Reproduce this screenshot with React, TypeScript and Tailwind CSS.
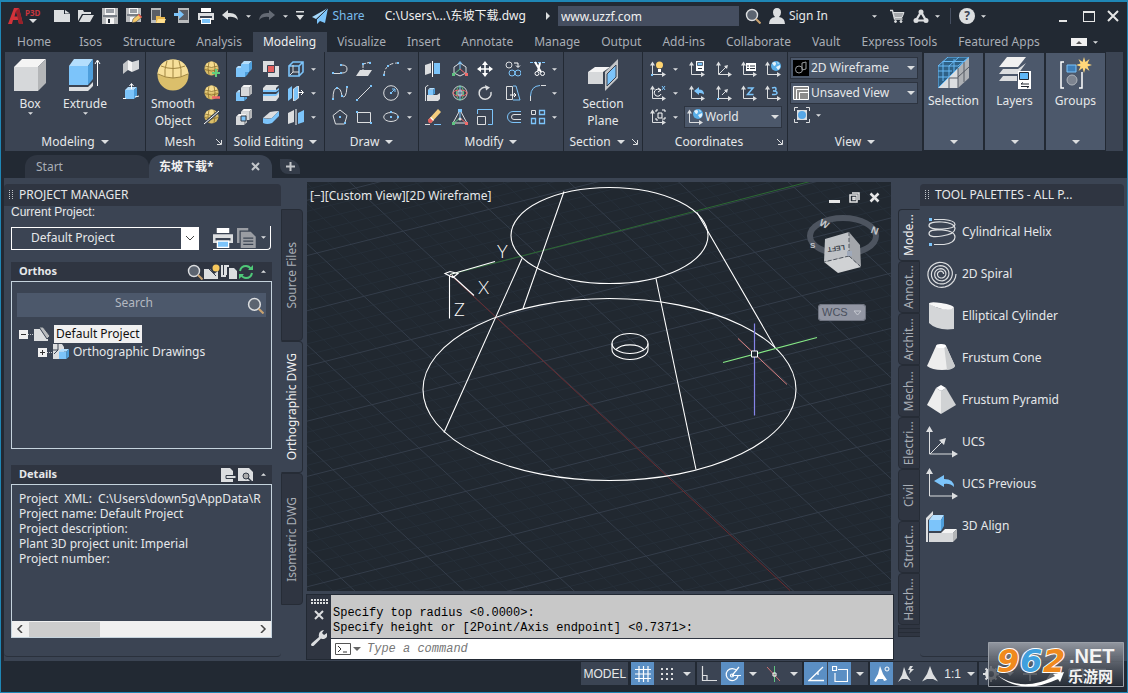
import { type ReactNode } from "react";

const W = "#dcdee0";
const B = "#7cc4fa";

function Cube({ x, y, s, blue = false }: { x: number; y: number; s: number; blue?: boolean }) {
  const d = s * 0.25;
  return (
    <g>
      <path d={`M${x} ${y + d}h${s - d}v${s - d}h${-(s - d)}z`} fill={blue ? "#7cc4fa" : "#d6d8da"} />
      <path d={`M${x} ${y + d}l${d} ${-d}h${s - d}l${-d} ${d}z`} fill={blue ? "#b4defd" : "#f4f4f4"} />
      <path d={`M${x + s - d} ${y + d}l${d} ${-d}v${s - d}l${-d} ${d}z`} fill={blue ? "#4e9fdc" : "#b4b6b8"} />
    </g>
  );
}

function Axes({ children }: { children?: ReactNode }) {
  return (
    <g>
      <path d="M2.500 3v10.500h11" fill="none" stroke={W} />
      <path d="M0 4.500L2.500 0.500L5 4.500zM12 11l4 2.500l-4 2.500z" fill={W} />
      {children}
    </g>
  );
}

function Globe({ x = 10, y = 5 }: { x?: number; y?: number }) {
  return (
    <g>
      <circle cx={x} cy={y} r="5" fill="#58aee8" />
      <path d={`M${x - 4} ${y - 3}q3-2 4 0q0 3-2 3zM${x} ${y + 1}l4-2q1 3-2 5zM${x + 1} ${y - 4}l2 1l-1 1z`} fill="#e4f2fb" />
    </g>
  );
}

function Sphere() {
  return (
    <g>
      <circle cx="7.500" cy="7.500" r="7" fill="#d9bd68" />
      <path d="M1 6q1-5 6.500-5.500q5.500 .5 6.500 5.500q-6.500 3-13 0z" fill="#f5dc8f" />
      <path d="M1 5q6.500 3 13 0M.5 8.500q7 3 14 0M5 1q-2 6 0 13M10 1q2 6 0 13" fill="none" stroke="#8a6f2c" strokeWidth=".8" />
    </g>
  );
}

const dot = (x: number, y: number) => <rect x={x - 1} y={y - 1} width="2" height="2" fill={B} />;

const icons: Record<string, ReactNode> = {
  new: <path d="M0 2h10v4h6v8H0zM11 2l5 3.500h-5z" fill={W} />,
  open: <path d="M0 13V2h5l1 2h7v2H4zM1 14L5 7h11l-4 7z" fill={W} />,
  save: (
    <g>
      <path d="M0 0h16v16H0z" fill="#b9bbbd" />
      <path d="M3 0h10v7H3zM4 10h8v6H4z" fill="#f5f5f5" />
      <path d="M4 2h8M4 4h8M1 8h14" stroke="#3b4453" />
      <path d="M6 11h2v4H6z" fill="#222933" />
    </g>
  ),
  saveAs: (
    <g>
      <path d="M0 0h15v14H0z" fill="#b9bbbd" />
      <path d="M3 0h9v6H3zM4 9h6v5H4z" fill="#f5f5f5" />
      <path d="M4 2h7M4 4h7M1 7h13" stroke="#3b4453" />
      <path d="M6 15l1-4l6-5l3 3l-6 5z" fill="#f5c96a" stroke="#222933" strokeWidth=".5" />
      <path d="M12 7l1-1l3 3l-1 1z" fill="#e55" />
    </g>
  ),
  webOpen: (
    <g>
      <path d="M1 0h10v15H1z" fill="#b9bbbd" />
      <path d="M2 2h8v10H2z" fill="#5a5e66" />
      <path d="M6 8h4l1 1h4v6H6z" fill="#e9b84e" />
      <path d="M8 11h8l-2 4H6z" fill="#ffdf8e" />
    </g>
  ),
  webSave: (
    <g>
      <path d="M4 0h11v15H4z" fill="#b9bbbd" />
      <path d="M5 2h9v10H5z" fill="#5a5e66" />
      <path d="M0 5h5V2l5 4.500L5 11V8H0z" fill={B} />
    </g>
  ),
  print: (
    <g>
      <path d="M3 0h10v4H3z" fill="#fff" />
      <path d="M0 5h16v7H0z" fill={W} />
      <path d="M2 8h12v2H2z" fill="#3b4453" />
      <path d="M3 10h10v6H3z" fill="#fff" />
      <path d="M4 11h8v4H4z" fill={B} />
    </g>
  ),
  undo: <path d="M0 7l6-5v3q9-1 10 7q-4-4-10-3v3z" fill={W} />,
  redo: <path d="M16 7l-6-5v3q-9-1-10 7q4-4 10-3v3z" fill="#646a74" />,
  more: <path d="M4 3h8v1.500H4zM4 7h8l-4 5z" fill={W} />,
  share: (
    <g>
      <path d="M16 0L0 9l4 2z" fill="#a5d8fb" />
      <path d="M16 0L5 11v5l3-3l5 2z" fill={B} />
      <path d="M16 0L5 11" stroke="#222933" strokeWidth=".8" />
    </g>
  ),
  find: (
    <g>
      <circle cx="7" cy="7" r="5.500" fill="#5c6470" stroke={W} strokeWidth="1.400" />
      <path d="M11 11l4.500 4.500" stroke="#c9a270" strokeWidth="2" />
    </g>
  ),
  user: <path d="M8 0q4 0 4 4.500q0 3-2 4.500q6 1 6 7H0q0-6 6-7q-2-1.500-2-4.500Q4 0 8 0z" fill={W} />,
  cart: (
    <g fill="none" stroke={W}>
      <path d="M1 2.500h2.500l2 8.500h8" strokeWidth="1.300" />
      <path d="M4 4.500h11l-2 5H5.500z" fill="#a6a9ad" />
      <circle cx="6.500" cy="13.500" r="1" fill={W} />
      <circle cx="12" cy="13.500" r="1" fill={W} />
    </g>
  ),
  app: (
    <g fill={W}>
      <path d="M8 4L3 12.500h10z" fill="none" stroke={W} strokeWidth="2.200" />
      <circle cx="8" cy="4" r="2.500" />
      <circle cx="3" cy="12.500" r="2.500" />
      <circle cx="13" cy="12.500" r="2.500" />
    </g>
  ),
  polysolid: (
    <g>
      <path d="M0 5l5-4v10l-5 4z" fill="#c4c6c8" />
      <path d="M5 1l4 2v10l-4-2z" fill="#f4f4f4" />
      <path d="M9 3l7-2v9l-7 3z" fill="#d6d8da" />
    </g>
  ),
  presspull: (
    <g>
      <Cube x={2} y={4} s={12} blue />
      <path d="M8.500 6V1M6.500 3l2-2.500l2 2.500M0 15.500h3M12 14l4-1" stroke="#fff" fill="none" />
    </g>
  ),
  meshAdd: (
    <g>
      <Sphere />
      <path d="M12 8v8M8 12h8" stroke="#62cf7e" strokeWidth="2" />
    </g>
  ),
  meshLess: (
    <g>
      <Sphere />
      <path d="M8 12.500h8" stroke="#f0696b" strokeWidth="2.500" />
    </g>
  ),
  meshCrease: (
    <g>
      <Sphere />
      <path d="M0 15L15 2" stroke="#3b4453" strokeWidth="3" />
      <path d="M0 15L15 2" stroke="#fff" />
    </g>
  ),
  union: (
    <g>
      <path d="M0 7h5V3h8v8h-4v5H0z" fill={B} />
      <path d="M0 7l2-2h3v2zM5 3l3-3h8l-3 3z" fill="#b4defd" />
      <path d="M13 3l3-3v8l-3 3zM9 11h4l-1.500 2.500L9 16z" fill="#4e9fdc" />
    </g>
  ),
  subtract: (
    <g>
      <Cube x={0} y={5} s={11} blue />
      <path d="M4 3h9v9H4z" fill="#3b4453" />
      <Cube x={5} y={0} s={11} />
    </g>
  ),
  intersect: (
    <g>
      <Cube x={5} y={0} s={11} />
      <Cube x={0} y={5} s={11} />
      <path d="M5 7h5v5H5z" fill={B} stroke="#333b47" />
    </g>
  ),
  interfere: (
    <g>
      <path d="M0 0h11v11H0zM5 5h11v11H5z" fill={W} />
      <path d="M4.500 4.500h7v7h-7z" fill="#e4605f" stroke="#3b4453" />
    </g>
  ),
  slice: (
    <g>
      <path d="M0 3l3-3h13l-3 3v4H0zM0 10h13l3-3v5l-3 4H0z" fill={W} />
      <path d="M0 5h13l3-2v2l-3 2H0zM0 9h13l3-3v2l-3 3H0z" fill={B} />
    </g>
  ),
  thicken: (
    <g>
      <path d="M0 9l7-6q5-1 9-1l-7 7q-4 1-9 0z" fill={W} />
      <path d="M0 9q5 2 9 0l7-7v5l-7 7q-5 2-9 0z" fill={B} />
    </g>
  ),
  extractEdges: (
    <g fill="none" stroke={B} strokeWidth="1.600">
      <path d="M1 5h10v10H1zM1 5l4-4h10v10l-4 4M11 5l4-4" />
      <path d="M5 4v7h6M5 11l-3 3" stroke={W} strokeWidth="1" />
    </g>
  ),
  extrudeFaces: (
    <g>
      <path d="M0 4l4-3v12l-4 3z" fill={B} />
      <path d="M5 4l4-3h2v12l-4 3H5z" fill={W} />
      <path d="M6 4l4-3v12l-4 3z" fill={B} />
      <path d="M10 7.500h5M13 5l2.500 2.500L13 10" stroke="#fff" fill="none" />
    </g>
  ),
  separate: (
    <g>
      <path d="M0 4l6-3v12l-6 2z" fill={W} />
      <path d="M10 4l6-3v12l-6 2z" fill={B} />
      <path d="M8 0v16" stroke="#fff" />
    </g>
  ),
  polyline: (
    <g>
      <path d="M1 12.500h8M10 4q5 0 5 4t-5 4" stroke={W} fill="none" />
      {dot(1, 12)}
      {dot(9, 4)}
      {dot(9, 12)}
    </g>
  ),
  polyline3d: (
    <g>
      <path d="M0 15l4-6h12l-4 6z" fill={W} />
      <path d="M7 11V3l8-2" stroke={W} fill="none" strokeDasharray="3 1" />
      {dot(7, 3)}
      {dot(14, 2)}
    </g>
  ),
  arc: (
    <g>
      <path d="M1 14Q2 2 15 2" stroke={W} fill="none" strokeDasharray="4 2" />
      {dot(1, 14)}
      {dot(5, 5)}
      {dot(15, 2)}
    </g>
  ),
  spline: (
    <g>
      <path d="M1 14Q1 3 5 3t5 8q4 4 5-9" stroke={W} fill="none" />
      {dot(1, 14)}
      {dot(5, 3)}
      {dot(10, 11)}
      {dot(15, 2)}
    </g>
  ),
  line: (
    <g>
      <path d="M1 15L15 1" stroke={W} />
      {dot(1, 15)}
      {dot(15, 1)}
    </g>
  ),
  circle: (
    <g>
      <circle cx="8" cy="8" r="7.300" stroke={W} fill="none" />
      <path d="M8 8l4-4M12 7V4H9" stroke={B} fill="none" />
      {dot(8, 8)}
    </g>
  ),
  polygon: (
    <g>
      <path d="M8 1l7 5.500L12.500 15h-9L1 6.500z" stroke={W} fill="none" />
      {dot(8, 8)}
      {dot(13, 14)}
    </g>
  ),
  rect: (
    <g>
      <path d="M1.500 3.500h13v10h-13z" stroke={W} fill="none" />
      {dot(1, 3)}
      {dot(15, 14)}
    </g>
  ),
  ellipse: (
    <g>
      <ellipse cx="8" cy="8" rx="7.300" ry="4.500" stroke={W} fill="none" />
      {dot(8, 8)}
      {dot(15, 8)}
      {dot(8, 3)}
    </g>
  ),
  mirror: (
    <g>
      <path d="M0 4l6-2v10l-6 2z" fill={W} />
      <path d="M9 2h6v11H9z" fill={B} />
      <path d="M7.500 0v16" stroke="#fff" />
    </g>
  ),
  align3d: (
    <g>
      <path d="M.5 16V2l3-2" stroke={W} fill="none" />
      <Cube x={3} y={3} s={7} blue />
      <path d="M2 10h10l3-2v6l-2 2H2z" fill={W} />
    </g>
  ),
  erase: (
    <g>
      <path d="M3 11l10-11l3 3L6 14z" fill="#f5cf7e" />
      <path d="M5 9l3 3l1-1l-3-3z" fill="#fff" />
      <path d="M3 11l2-2l3 3l-2 2q-3 1-3-3z" fill="#e55f5f" />
      <path d="M0 15.500h5" stroke={W} />
      <path d="M9 15.500h7" stroke={B} />
    </g>
  ),
  move3d: (
    <g fill="none">
      <path d="M8 2L2 6v6l6 3l6-3V6z" stroke={W} />
      <path d="M8 8V1M6 3l2-2.500L10 3" stroke={B} />
      <path d="M8 8l-6 5" stroke="#5fc481" />
      <path d="M8 8l6 5" stroke="#ee6a6a" />
      <path d="M0 12h3v3H0z" fill="#5fc481" />
      <path d="M13 12h3v3h-3z" fill="#ee6a6a" />
    </g>
  ),
  rotate3d: (
    <g fill="none">
      <circle cx="8" cy="8" r="7" stroke="#c9cbcd" />
      <ellipse cx="8" cy="8" rx="3.500" ry="7" stroke="#5fc481" />
      <ellipse cx="8" cy="8" rx="7" ry="3" stroke="#ee6a6a" />
      <path d="M6 6h4v4H6z" stroke={W} />
      <path d="M8 1v14" stroke={B} />
    </g>
  ),
  scale3d: (
    <g fill="none">
      <path d="M8 1L1 14h14z" stroke={W} />
      <path d="M8 9V1" stroke={B} />
      <path d="M8 9l-6 5" stroke="#5fc481" />
      <path d="M8 9l6 5" stroke="#ee6a6a" />
      <path d="M6 0h4v3H6z" fill={B} />
      <path d="M0 13h3v3H0z" fill="#5fc481" />
      <path d="M13 13h3v3h-3z" fill="#ee6a6a" />
      <circle cx="8" cy="10" r="1.500" fill={W} />
    </g>
  ),
  move: (
    <g>
      <path d="M8 2v12M2 8h12" stroke="#fff" strokeWidth="1.600" />
      <path d="M8 0l3 4H5zM8 16l3-4H5zM0 8l4-3v6zM16 8l-4-3v6z" fill="#fff" />
    </g>
  ),
  rotate: (
    <g>
      <path d="M10 2.500A6 6 0 1 0 14 7" stroke={W} strokeWidth="1.500" fill="none" />
      <path d="M8 0l5 2.500l-4 3z" fill={W} />
    </g>
  ),
  scale: (
    <g fill="none">
      <path d="M.5 5V.5h15v15H11" stroke={B} />
      <path d="M.5 7.500h8v8h-8z" stroke={W} />
    </g>
  ),
  copy: (
    <g fill="none">
      <circle cx="4" cy="4" r="3" stroke={W} />
      <circle cx="7" cy="12" r="3" stroke={B} />
      <circle cx="13" cy="12" r="3" stroke={B} />
      <path d="M9 2h4v4M11 4.500l2 2l2-2" stroke="#fff" />
    </g>
  ),
  stretch: (
    <g fill="none">
      <path d="M1.500 1.500h6v13h-6z" stroke={W} />
      <path d="M8 1h3l4 14H8" stroke={B} />
      <path d="M5 10h6M9 8l2 2l-2 2" stroke="#fff" />
    </g>
  ),
  offset: (
    <g fill="none">
      <path d="M16 2.500H8a5.500 5.500 0 0 0 0 11h8" stroke={B} />
      <path d="M16 5.500H9a2.500 2.500 0 0 0 0 5h7" stroke={W} />
    </g>
  ),
  trim: (
    <g fill="none">
      <path d="M0 1.500h16" stroke={B} strokeDasharray="3 1" />
      <path d="M5 1l6 10M10 2L8 10" stroke="#fff" strokeWidth="2" />
      <circle cx="7" cy="12.500" r="2" stroke="#fff" />
      <circle cx="12.500" cy="12.500" r="2" stroke="#fff" />
    </g>
  ),
  fillet: (
    <g fill="none">
      <path d="M.5 16v-5" stroke={W} />
      <path d="M.5 11Q1 1 10 .5" stroke={B} />
      <path d="M11 .5h5" stroke={W} />
    </g>
  ),
  array: (
    <g fill="none">
      <path d="M1.500 1.500h4v4h-4z" stroke={W} />
      <path d="M9.500 1.500h5v4h-5zM1.500 9.500h4v5h-4zM9.500 9.500h5v5h-5z" stroke={B} strokeWidth="1.300" />
    </g>
  ),
  ucsIcon: (
    <Axes>
      <circle cx="9.500" cy="4" r="3.500" fill="#ffd470" />
      <path d="M8 8h3v3H8z" fill="#fff" />
      {dot(2, 14)}
    </Axes>
  ),
  ucsX: (
    <Axes>
      <path d="M10 5a3.500 3.500 0 1 0 1 4M8 3l3 2l-3 2" stroke="#fff" fill="none" />
      <path d="M12 1l3 4M15 1l-3 4" stroke={B} />
    </Axes>
  ),
  ucsView: (
    <Axes>
      <path d="M8 4h4v5H8zM6 3V1h2M12 1h3v2M15 8v2h-3M6 9v2h2" stroke="#fff" fill="none" />
    </Axes>
  ),
  ucsNamed: (
    <Axes>
      <path d="M7 0h8v10H7z" fill="#fff" />
      <path d="M8.500 1.500h5v3h-5z" fill={B} stroke="#333b47" strokeWidth=".7" />
      <path d="M9 7.500h4" stroke="#333b47" />
    </Axes>
  ),
  ucsPrev: (
    <Axes>
      <path d="M5 6l5-4v2.500q5 0 5 5q-2-2-5-1.500V10z" fill={B} />
    </Axes>
  ),
  ucs: (
    <Axes>
      <path d="M3 13l7-7" stroke={W} />
      <path d="M12 4l-1 4l-3-3z" fill={W} />
    </Axes>
  ),
  ucsOrigin: (
    <Axes>
      <path d="M6 10l4-4" stroke={W} />
      <path d="M12 4l-1 4l-3-3z" fill={W} />
      {dot(2, 14)}
    </Axes>
  ),
  ucsList: (
    <Axes>
      <path d="M5 2h10v8H5z" fill="#fff" />
      <path d="M6 5h2M9 5h5M6 7.500h2M9 7.500h5" stroke="#333b47" />
    </Axes>
  ),
  ucsZ: (
    <Axes>
      <path d="M6.500 3h5.500l-5.500 6.500h6" stroke={B} strokeWidth="1.500" fill="none" />
    </Axes>
  ),
  ucsWorld: (
    <Axes>
      <Globe x={11} y={5} />
    </Axes>
  ),
  ucs3: (
    <Axes>
      <path d="M7 3q4-1.500 4 1t-3 2q4 0 4 2t-5 1.500" stroke={B} strokeWidth="1.500" fill="none" />
    </Axes>
  ),
  wire: (
    <g fill="none" stroke="#9a9da0">
      <path d="M0 0h16v16H0z" fill="#000" stroke="none" />
      <circle cx="6" cy="9.500" r="3.500" />
      <path d="M9 3l4-1v7l-4 1z" />
    </g>
  ),
  viewport: (
    <g>
      <path d="M.5 1.500h15v13H.5z" fill="#8b8b8b" stroke="#fff" />
      <path d="M3.500 14V4.500H15M6.500 14V7.500H15" stroke="#fff" fill="none" />
    </g>
  ),
  viewFrame: (
    <g>
      <path d="M3 3h10v10H3z" fill={W} />
      <circle cx="8" cy="8" r="4" fill="#57a7e6" />
      <path d="M.5 4V.5H4M12 .5h3.500V4M15.500 12v3.500H12M4 15.500H.5V12" stroke={W} fill="none" />
    </g>
  ),
  copyPages: (
    <g fill="#9a9da3">
      <path d="M0 0h9v2H2v10H0z" />
      <path d="M3 3h8l4 4v9H3z" />
      <path d="M5 8h8M5 10.500h8M5 13h8" stroke="#3b4453" />
    </g>
  ),
  book: (
    <g>
      <path d="M0 3h8l6 6v6H0z" fill={W} />
      <path d="M5 1h4l7 9l-3 3z" fill="#b9bbbd" stroke="#3b4453" />
    </g>
  ),
  bookNew: (
    <g>
      <path d="M0 5h6l4 5l4-3v8H0z" fill={W} />
      <path d="M5 5l7 7" stroke="#3b4453" />
      <circle cx="12" cy="4" r="3.500" fill="#f6c75c" />
    </g>
  ),
  pages: <path d="M0 1h2v10h3v2H0zM3 1h5v2H6v8H3zM8 4h5l3 3v8H8z" fill={W} />,
  refresh: (
    <g fill="none" stroke="#4fc878" strokeWidth="2">
      <path d="M2 7q1-5 6-5q3 0 5 3M14 9q-1 5-6 5q-3 0-5-3" />
      <path d="M15 1v5h-5zM1 15v-5h5z" fill="#4fc878" stroke="none" />
    </g>
  ),
  drawings: (
    <g>
      <path d="M0 0h9l2 3v12H0z" fill={W} />
      <path d="M0 6h5M5 0v6M1 10l4-4" stroke="#3b4453" />
      <Cube x={6} y={5} s={10} blue />
    </g>
  ),
  pageOut: (
    <g>
      <path d="M0 1h9l3 3v11H0z" fill={W} />
      <path d="M5 8.500h10v3H5z" fill={W} stroke="#333b47" />
    </g>
  ),
  pageFind: (
    <g>
      <path d="M0 1h11l4 4v9H0z" fill={W} />
      <circle cx="8" cy="9" r="3" fill="#aaa" stroke="#333b47" />
      <path d="M10 11l4 4" stroke="#333b47" strokeWidth="1.500" />
    </g>
  ),
  wrench: <path d="M1 16q-2-1 0-3l7-6q-1-4 2-6q2-1 3-1l-2 3l2 2l3-2q1 4-2 5.500q-2 1-4 0l-7 7q-1 1-2 .5z" fill={W} />,
  prompt: (
    <g>
      <path d="M.5 2.500h15v11H.5z" fill="#fff" stroke="#555" />
      <path d="M3 5l3 3l-3 3M8 11h4" stroke="#333" fill="none" />
    </g>
  ),
  gridOn: <path d="M4 0v16M8.500 0v16M13 0v16M0 3.500h16M0 8h16M0 12.500h16" stroke="#fff" strokeWidth="1.200" />,
  snap: (
    <g fill={W}>
      {[2, 7, 12].map((y) => [2, 7, 12].map((x) => <rect key={`${x}-${y}`} x={x} y={y} width="2" height="2" />))}
    </g>
  ),
  ortho: <path d="M1.500 0v14.500H16M1.500 9.500h4.500v5" stroke={W} fill="none" strokeWidth="1.200" />,
  polar: (
    <g fill="none" stroke="#fff" strokeWidth="1.200">
      <path d="M12 5a6 6 0 1 0 1 5M7 9.500h9M7 9.500L14 1" />
      <circle cx="7" cy="9.500" r="1.500" />
    </g>
  ),
  isodraft: (
    <g fill="none">
      <path d="M8.500 0v16" stroke="#5fc481" />
      <path d="M1 1l13 14" stroke="#d07272" />
      <path d="M7 7h3v3H7z" stroke="#fff" />
    </g>
  ),
  track: <path d="M15 1L1 14.500h15M10 6v3" stroke="#fff" fill="none" strokeWidth="1.300" />,
  osnap: <path d="M6 3.500h9.500v12H3V7M.5.500h4v4h-4z" stroke="#fff" fill="none" strokeWidth="1.200" />,
  annoVis: (
    <g fill="#fff">
      <path d="M6 0l3 8l4 6l-3 1l-1-2H4l-2 3l-2-1l4-7z" />
      <circle cx="13" cy="3" r="2" fill="none" stroke="#fff" />
    </g>
  ),
  annoAuto: (
    <g fill={W}>
      <path d="M6 1l3 8l4 6l-4-2H4l-4 3l4-7z" />
      <path d="M12 0l-2 4h2l-1 4l5-5h-3l2-3z" />
    </g>
  ),
  anno: <path d="M8 0l3 8l5 7.500l-5-2.500H5l-5 2.500L5 8z" fill={W} />,
  gear: (
    <g>
      <circle cx="8" cy="8" r="4.500" fill="none" stroke={W} strokeWidth="3" />
      <path d="M8 0v3M8 13v3M0 8h3M13 8h3M2.500 2.500l2 2M11.500 11.500l2 2M13.500 2.500l-2 2M4.500 11.500l-2 2" stroke={W} strokeWidth="2" />
    </g>
  ),
  plus: <path d="M8 1v14M1 8h14" stroke={W} strokeWidth="1.500" />,
  iso: <path d="M1 3h14v10H1zM4 6h5v4H4z" stroke={W} fill="none" />,
  menu: <path d="M1 3.500h14M1 8h14M1 12.500h14" stroke={W} strokeWidth="1.500" />,
};

function Icon({ name, className = "h-4 w-4" }: { name: string; className?: string }) {
  return (
    <svg viewBox="0 0 16 16" className={`shrink-0 ${className}`} aria-hidden="true">
      {icons[name]}
    </svg>
  );
}

function Caret({ small = false }: { small?: boolean }) {
  return (
    <svg viewBox="0 0 8 4" className={`shrink-0 ${small ? "h-[3px] w-[5px]" : "h-1 w-2"}`} aria-hidden="true">
      <path d="M0 0h8L4 4z" fill={W} />
    </svg>
  );
}

function IconButton({ name, label, className = "" }: { name: string; label: string; className?: string }) {
  return (
    <button type="button" aria-label={label} className={`flex items-center justify-center ${className}`}>
      <Icon name={name} />
    </button>
  );
}

function CaretButton({ label }: { label: string }) {
  return (
    <button type="button" aria-label={label} className="flex items-center justify-center">
      <Caret small />
    </button>
  );
}

function Panel({ title, className, caret, launcher, children }: { title: string; className: string; caret?: boolean; launcher?: boolean; children: ReactNode }) {
  return (
    <section className={`flex shrink-0 flex-col border-r border-[#222933] ${className}`}>
      <div className="flex-1 pt-[5px]">{children}</div>
      <div className={`relative flex h-[19px] items-center justify-center gap-1.5 whitespace-nowrap ${launcher ? "pr-3" : ""}`}>
        <span>{title}</span>
        {caret && <Caret />}
        {launcher && (
          <svg viewBox="0 0 6 6" className="absolute right-1 h-1.5 w-1.5" aria-hidden="true">
            <path d="M0 0l5 5M5.500 1v4.500H1" stroke={W} fill="none" />
          </svg>
        )}
      </div>
    </section>
  );
}

const bigIcons: Record<string, ReactNode> = {
  Box: <Cube x={0} y={0} s={32} />,
  Extrude: (
    <g>
      <path d="M0 28h19l5-5v4l-5 5H0z" fill={W} />
      <path d="M0 7h19v19H0z" fill={B} />
      <path d="M0 7l5-7h19l-5 7z" fill="#b4defd" />
      <path d="M19 7l5-7v20l-5 6z" fill="#4e9fdc" />
      <path d="M28.500 27V2M26 5l2.500-4L31 5" stroke="#fff" fill="none" />
    </g>
  ),
  Smooth: (
    <g>
      <circle cx="16" cy="16" r="15.500" fill="#dbbf6b" />
      <path d="M.5 15Q2 1 16 .5Q30 1 31.500 15Q16 23 .5 15z" fill="#f7e09a" />
      <path d="M1 15q15 8 30 0M4 7q12 5 24 0M10 2q-3 9-2 16M22 2q3 9 2 16M16 1v18" fill="none" stroke="#a08540" />
    </g>
  ),
  Section: (
    <g>
      <path d="M1 13h15v12H1z" fill="#d6d8da" />
      <path d="M1 13l7-5h15l-7 5z" fill="#f4f4f4" />
      <path d="M18 13L31 0v19L18 32z" fill="#c4c6c8" />
      <path d="M20 15l9-9v12l-9 9z" fill={B} stroke="#3b4453" />
    </g>
  ),
  Selection: (
    <g>
      <path d="M0 9h20v22H0z" fill={W} />
      <path d="M20 9L31 0v21l-11 10z" fill="#aeb1b5" />
      <path d="M0 9L10 0h21L0 31z" fill="#2f6186" />
      <path d="M0 31V9h20M0 9L10 0h21M5 4.500h20M11 9L21 0M20 9L31 0M0 20h11M11 9v11M5 4v20M0 14h14M16 2v13M31 0L0 31" fill="none" stroke="#69b9f4" />
      <path d="M20 11v20M20 20l11-10M11 21h9M11 21v10M26 5v20" fill="none" stroke="#555b64" />
    </g>
  ),
  Layers: (
    <g>
      <path d="M8 0h19l-8 10H0z" fill="#f1f1f1" />
      <path d="M4 12h15l8-6l-8 11H0zM4 19h14v5H0z" fill={W} />
      <path d="M19 14h13v18H19z" fill="#fff" />
      <path d="M20.500 15.500h9v7h-9z" fill="#5fb6f5" stroke="#222933" />
      <path d="M22 27h8M22 29.500h8M24 25.500l-2 1.500M28 31l2-1.500" stroke="#222933" fill="none" />
    </g>
  ),
  Groups: (
    <g>
      <path d="M4 5H1v26h3M19 31h3V15" fill="none" stroke="#fff" strokeWidth="1.500" />
      <path d="M7 8h9v7H7z" fill="#3f7fb8" stroke={B} />
      <circle cx="12" cy="23" r="5" fill="#7d8490" stroke="#aeb3ba" />
      <path d="M24 0l1.500 5l4-3l-2 4.500l4.500 1.500l-4.500 1.500l2 4.500l-4-3l-1.500 5l-1.500-5l-4 3l2-4.500L16 8l4.500-1.500l-2-4.500l4 3z" fill="#ffd77a" />
    </g>
  ),
};

function BigIcon({ name }: { name: string }) {
  return (
    <svg viewBox="0 0 32 32" className="h-8 w-8" aria-hidden="true">
      {bigIcons[name]}
    </svg>
  );
}

const menuTabs = ["Isos", "Structure", "Analysis", "Modeling", "Visualize", "Insert", "Annotate", "Manage", "Output", "Add-ins", "Collaborate", "Vault", "Express Tools", "Featured Apps"];

function TitleBar() {
  return (
    <header className="flex h-7 items-center pl-[7px] pr-2">
      <button type="button" aria-label="Application menu" className="mr-3.5 flex items-center gap-px">
        <svg viewBox="0 0 16 18" className="h-[18px] w-4" aria-hidden="true">
          <path d="M0 17L6 1h5l4 16h-4l-1-4H5l-1 4z" fill="#d3333a" />
          <path d="M6.500 9.500L8 4l1.500 5.500z" fill="#222933" />
          <path d="M11 1l4 16h-4L8 4z" fill="#98212a" />
        </svg>
        <span className="flex flex-col items-center gap-0.5">
          <span className="text-[8px] font-bold leading-2 text-[#c8353d]">P3D</span>
          <Caret />
        </span>
      </button>
      <div className="flex items-center gap-2">
        <IconButton name="new" label="New" />
        <IconButton name="open" label="Open" />
        <IconButton name="save" label="Save" />
        <IconButton name="saveAs" label="Save As" />
        <IconButton name="webOpen" label="Open from Web" />
        <IconButton name="webSave" label="Save to Web" />
        <IconButton name="print" label="Plot" />
        <IconButton name="undo" label="Undo" />
        <CaretButton label="Undo list" />
        <IconButton name="redo" label="Redo" />
        <CaretButton label="Redo list" />
      </div>
      <IconButton name="more" label="Customize" className="ml-1" />
      <button type="button" className="ml-1 flex items-center gap-1 text-[#79bdee]">
        <Icon name="share" />
        Share
      </button>
      <span className="ml-5 whitespace-nowrap text-[#f0f0f0]">C:\Users\...\东坡下载.dwg</span>
      <svg viewBox="0 0 4 8" className="ml-5 mr-2 h-2 w-1" aria-hidden="true">
        <path d="M0 0l4 4l-4 4z" fill={W} />
      </svg>
      <input
        type="text"
        aria-label="Search help"
        defaultValue="www.uzzf.com"
        className="h-5 min-w-0 flex-1 bg-[#454e60] px-[3px] text-[#f0f0f0] outline-none"
      />
      <IconButton name="find" label="Find" className="ml-1.5" />
      <button type="button" className="ml-2 flex items-center gap-1 whitespace-nowrap">
        <Icon name="user" />
        Sign In
      </button>
      <div className="ml-11 flex items-center gap-3">
        <CaretButton label="Account menu" />
        <IconButton name="cart" label="Store" />
      </div>
      <div className="ml-2 flex items-center gap-1.5">
        <IconButton name="app" label="Apps" />
        <CaretButton label="Apps menu" />
        <span className="ml-1 h-4 w-px bg-[#454e60]" />
      </div>
      <div className="ml-2 flex items-center gap-1.5">
        <button type="button" aria-label="Help" className="flex h-4 w-4 items-center justify-center rounded-full bg-[#dcdee0] text-xs font-bold text-[#3b4453]">
          ?
        </button>
        <CaretButton label="Help menu" />
      </div>
      <div className="ml-[73px] flex items-center gap-3">
        <button type="button" aria-label="Minimize" className="flex h-3 w-3 items-end">
          <span className="h-0.5 w-2 bg-[#e6e6e6]" />
        </button>
        <button type="button" aria-label="Maximize" className="h-[11px] w-3 border border-t-2 border-[#e6e6e6]" />
        <button type="button" aria-label="Close" className="h-3 w-3">
          <svg viewBox="0 0 12 12" aria-hidden="true">
            <path d="M1 1l10 10M11 1L1 11" stroke="#e6e6e6" strokeWidth="2" />
          </svg>
        </button>
      </div>
    </header>
  );
}

function MenuTabs() {
  return (
    <nav className="flex h-[22px] items-stretch pl-1 pt-0.5 text-[#a9aeb6]">
      <a href="#home" className="flex items-center pl-3 pr-[18px]">
        Home
      </a>
      {menuTabs.map((t) => (
        <a
          key={t}
          href="#ribbon"
          className={`flex items-center whitespace-nowrap pl-[10px] pr-[11px] ${t === "Modeling" ? "bg-[#3b4453] text-[#f0f0f0]" : ""}`}
        >
          {t}
        </a>
      ))}
      <div className="ml-5 flex items-center gap-1.5">
        <button type="button" aria-label="Collapse ribbon" className="flex h-2 w-4 items-center justify-center bg-[#f0f0f0]">
          <svg viewBox="0 0 6 3" className="h-[3px] w-1.5" aria-hidden="true">
            <path d="M0 3h6L3 0z" fill="#555" />
          </svg>
        </button>
        <CaretButton label="Ribbon menu" />
      </div>
    </nav>
  );
}

function Select({ label, icon, value, className = "" }: { label: string; icon: string; value: string; className?: string }) {
  return (
    <label className={`flex h-[22px] items-center gap-0.5 border border-[#2d3440] bg-[#4c586b] px-0.5 ${className}`}>
      <Icon name={icon} />
      <select aria-label={label} className="min-w-0 flex-1 appearance-none bg-transparent outline-none">
        <option>{value}</option>
      </select>
      <Caret />
    </label>
  );
}

const solidRows = [
  ["union", "interfere", "extractEdges"],
  ["subtract", "slice", "extrudeFaces"],
  ["intersect", "thicken", "separate"],
];
const drawRows = [
  ["polyline", "polyline3d", "arc"],
  ["spline", "line", "circle"],
  ["polygon", "rect", "ellipse"],
];
const modifyRows = [
  ["mirror", "move3d", "move", "copy", "trim"],
  ["align3d", "rotate3d", "rotate", "stretch", "fillet"],
  ["erase", "scale3d", "scale", "offset", "array"],
];

function IconRows({ rows, className }: { rows: string[][]; className: string }) {
  return (
    <div className={`grid auto-rows-[24px] ${className}`}>
      {rows.map((row) => [
        ...row.map((name) => <IconButton key={name} name={name} label={name} />),
        <CaretButton key={`${row[0]}-more`} label={`More ${row[0]}`} />,
      ])}
    </div>
  );
}

function Ribbon() {
  return (
    <div className="mx-1 flex h-[99px] bg-[#3b4453]">
      <Panel title="Modeling" caret className="w-[141px]">
        <div className="flex pt-0.5">
          <button type="button" className="flex w-[50px] flex-col items-center">
            <BigIcon name="Box" />
            <span className="mt-1 leading-[17px]">Box</span>
            <Caret small />
          </button>
          <button type="button" className="flex w-[60px] flex-col items-center">
            <BigIcon name="Extrude" />
            <span className="mt-1 leading-[17px]">Extrude</span>
            <Caret small />
          </button>
          <div className="flex flex-col gap-2 pl-2">
            <IconButton name="polysolid" label="Polysolid" />
            <IconButton name="presspull" label="Presspull" />
          </div>
        </div>
      </Panel>
      <Panel title="Mesh" launcher className="w-[81px]">
        <div className="flex">
          <button type="button" className="flex w-[54px] flex-col items-center pt-0.5">
            <BigIcon name="Smooth" />
            <span className="mt-1 leading-[17px]">Smooth Object</span>
          </button>
          <div className="grid w-6 auto-rows-[24px]">
            <IconButton name="meshAdd" label="Smooth More" />
            <IconButton name="meshLess" label="Smooth Less" />
            <IconButton name="meshCrease" label="Add Crease" />
          </div>
        </div>
      </Panel>
      <Panel title="Solid Editing" caret className="w-[98px]">
        <IconRows rows={solidRows} className="grid-cols-[28px_26px_24px_10px] pl-[3px]" />
      </Panel>
      <Panel title="Draw" caret className="w-[94px]">
        <IconRows rows={drawRows} className="grid-cols-[24px_24px_30px_6px] pl-[3px]" />
      </Panel>
      <Panel title="Modify" caret className="w-[145px]">
        <IconRows rows={modifyRows} className="grid-cols-[27px_28px_22px_34px_16px_16px]" />
      </Panel>
      <Panel title="Section" caret launcher className="w-[79px]">
        <button type="button" className="flex w-full flex-col items-center pt-0.5">
          <BigIcon name="Section" />
          <span className="mt-1 w-14 leading-[17px]">Section Plane</span>
        </button>
      </Panel>
      <Panel title="Coordinates" launcher className="w-[145px]">
        <div className="grid auto-rows-[24px] grid-cols-[24px_10px_34px_20px_30px_18px] items-center pl-[3px]">
          <IconButton name="ucsIcon" label="UCS Icon" />
          <CaretButton label="UCS Icon options" />
          <IconButton name="ucsNamed" label="Named UCS" />
          <IconButton name="ucs" label="UCS" />
          <IconButton name="ucsList" label="UCS List" />
          <IconButton name="ucsWorld" label="World UCS" />
          <IconButton name="ucsX" label="Rotate X" />
          <CaretButton label="Rotate options" />
          <IconButton name="ucsPrev" label="UCS Previous" />
          <IconButton name="ucsOrigin" label="Origin" />
          <IconButton name="ucsZ" label="Z-Axis" />
          <IconButton name="ucs3" label="3 Point" />
          <IconButton name="ucsView" label="View UCS" />
          <CaretButton label="View UCS options" />
          <Select label="Current UCS" icon="ucsWorld" value="World" className="col-span-4 ml-1" />
        </div>
      </Panel>
      <Panel title="View" caret className="w-[135px]">
        <div className="flex flex-col gap-[3px] pl-0.5 pr-1">
          <Select label="Visual style" icon="wire" value="2D Wireframe" />
          <Select label="Named view" icon="viewport" value="Unsaved View" />
          <div className="flex items-center gap-1.5 pl-1">
            <IconButton name="viewFrame" label="Viewport" />
            <CaretButton label="Viewport options" />
          </div>
        </div>
      </Panel>
      <div className="flex gap-0.5 bg-[#222933] px-px py-px">
        {["Selection", "Layers", "Groups"].map((t) => (
          <button key={t} type="button" className="flex w-[59px] flex-col items-center bg-[#4c586b] pt-1">
            <BigIcon name={t} />
            <span className="mt-[3px] leading-[17px]">{t}</span>
            <span className="mb-1.5 mt-auto">
              <Caret />
            </span>
          </button>
        ))}
      </div>
    </div>
  );
}

function DocTabs() {
  return (
    <div className="flex h-[27px] items-end pl-6">
      <a href="#start" className="flex h-[23px] w-[124px] items-center rounded-t-xl bg-[#2f3642] pl-[11px] text-[#a9aeb6]">
        Start
      </a>
      <div className="flex h-[23px] w-[123px] items-center justify-between rounded-t-xl bg-[#3b4453] pl-[10px] pr-3 font-bold text-[#f0f0f0]">
        <a href="#drawing">东坡下载*</a>
        <button type="button" aria-label="Close drawing">
          <svg viewBox="0 0 9 9" className="h-[9px] w-[9px]" aria-hidden="true">
            <path d="M1 1l7 7M8 1L1 8" stroke="#c3c6ca" strokeWidth="2" />
          </svg>
        </button>
      </div>
      <button type="button" aria-label="New drawing" className="mb-1 ml-2 flex h-[15px] w-5 items-center justify-center rounded-bl-lg rounded-tr-xl bg-[#343c49]">
        <svg viewBox="0 0 9 9" className="h-[9px] w-[9px]" aria-hidden="true">
          <path d="M4.500 0v9M0 4.500h9" stroke="#c3c6ca" strokeWidth="2" />
        </svg>
      </button>
    </div>
  );
}

function Grip() {
  return (
    <svg viewBox="0 0 4 10" className="h-[10px] w-1 shrink-0" aria-hidden="true">
      <path d="M.5 0v10M3.500 0v10" stroke="#c3c6ca" strokeDasharray="1 1" />
    </svg>
  );
}

const details = [
  "Project  XML:  C:\\Users\\down5g\\AppData\\R",
  "Project name: Default Project",
  "Project description:",
  "Plant 3D project unit: Imperial",
  "Project number:",
];

function ProjectManager() {
  return (
    <aside className="flex w-[302px] shrink-0 pb-1 pt-1.5">
      <div className="flex w-[277px] shrink-0 flex-col rounded-b border-b border-[#2a313c]">
        <h2 className="flex h-[22px] items-center gap-1.5 rounded-t bg-[#2f3541] pl-[5px]">
          <Grip />
          PROJECT MANAGER
        </h2>
        <div className="flex flex-1 flex-col pb-[18px] pl-[7px] pr-[9px]">
          <label htmlFor="project" className="h-3 font-['Liberation_Sans',sans-serif] leading-3">
            Current Project:
          </label>
          <div className="mt-2 flex items-center">
            <div className="flex h-[23px] w-[188px] items-center border border-white">
              <select id="project" className="h-full min-w-0 flex-1 appearance-none pl-[19px] outline-none">
                <option>Default Project</option>
              </select>
              <span className="flex h-full w-[17px] items-center justify-center bg-white">
                <svg viewBox="0 0 8 5" className="h-[5px] w-2" aria-hidden="true">
                  <path d="M0 0l4 4l4-4" stroke="#444" fill="none" />
                </svg>
              </span>
            </div>
            <div className="ml-3.5 flex h-6 items-center gap-1 rounded-br border-b border-r border-white pr-1">
              <button type="button" aria-label="Print">
                <Icon name="print" className="h-5 w-5" />
              </button>
              <button type="button" aria-label="Reports">
                <Icon name="copyPages" className="h-5 w-5" />
              </button>
              <CaretButton label="Report options" />
            </div>
          </div>
          <div className="mt-3 flex h-[19px] items-center gap-px bg-[#2f3541] pl-2 pr-1.5">
            <h3 className="mr-auto text-[11px] font-bold">Orthos</h3>
            <IconButton name="find" label="Find" />
            <IconButton name="bookNew" label="New project" />
            <IconButton name="pages" label="Copy drawings" />
            <IconButton name="refresh" label="Refresh" />
            <span className="ml-1.5 flex rotate-180">
              <Caret small />
            </span>
          </div>
          <div className="flex-1 border border-[#c5d3dd] px-[5px] pt-[11px]">
            <div className="flex h-6 items-center bg-[#4c586b] pr-0.5">
              <input type="search" aria-label="Search project" placeholder="Search" className="min-w-0 flex-1 bg-transparent pb-1 pl-4 text-center outline-none placeholder:text-[#b4b9c1]" />
              <Icon name="find" className="h-[17px] w-[17px]" />
            </div>
            <ul className="pl-0.5 pt-2">
              <li>
                <div className="flex h-[18px] items-center">
                  <button type="button" aria-label="Collapse" className="flex h-[9px] w-[9px] items-center justify-center bg-[#f0f0f0]">
                    <span className="h-px w-[5px] bg-[#333]" />
                  </button>
                  <span className="mr-px w-[5px] border-t border-dotted border-[#c3c6ca]" />
                  <Icon name="book" />
                  <span className="ml-1 bg-[#f0f0f0] px-0.5 leading-[18px] text-[#111]">Default Project</span>
                </div>
                <ul className="pl-[19px]">
                  <li className="flex h-[18px] items-center">
                    <button type="button" aria-label="Expand" className="flex h-[9px] w-[9px] items-center justify-center bg-[#f0f0f0]">
                      <svg viewBox="0 0 5 5" className="h-[5px] w-[5px]" aria-hidden="true">
                        <path d="M2.500 0v5M0 2.500h5" stroke="#333" />
                      </svg>
                    </button>
                    <span className="mr-px w-[5px] border-t border-dotted border-[#c3c6ca]" />
                    <Icon name="drawings" />
                    <span className="ml-1">Orthographic Drawings</span>
                  </li>
                </ul>
              </li>
            </ul>
          </div>
          <div className="mt-4 flex h-[19px] items-center gap-px bg-[#2f3541] pl-2 pr-1.5">
            <h3 className="mr-auto text-[11px] font-bold">Details</h3>
            <IconButton name="pageOut" label="Export" />
            <IconButton name="pageFind" label="Preview" />
            <span className="ml-1.5 flex rotate-180">
              <Caret small />
            </span>
          </div>
          <div className="flex h-[154px] flex-col border border-[#c5d3dd]">
            <div className="flex-1 overflow-hidden whitespace-pre pl-[7px] pt-1.5">
              {details.map((line) => (
                <p key={line} className="leading-[15px]">
                  {line}
                </p>
              ))}
            </div>
            <div className="flex h-4 items-center bg-[#f0f0f0] px-1">
              <svg viewBox="0 0 8 8" className="h-2 w-2" aria-hidden="true">
                <path d="M6 0L2 4l4 4" stroke="#444" strokeWidth="1.500" fill="none" />
              </svg>
              <span className="ml-[5px] mr-auto h-[15px] w-[71px] bg-[#cdcdcd]" />
              <svg viewBox="0 0 8 8" className="h-2 w-2" aria-hidden="true">
                <path d="M2 0l4 4l-4 4" stroke="#444" strokeWidth="1.500" fill="none" />
              </svg>
            </div>
          </div>
        </div>
      </div>
      <div className="flex flex-col pt-[25px]">
        {["Source Files", "Orthographic DWG", "Isometric DWG"].map((t) => (
          <button
            key={t}
            type="button"
            className={`flex h-[132px] w-[22px] items-center justify-center rounded-r border border-[#262c36] ${
              t === "Orthographic DWG" ? "border-l-transparent text-[#f0f0f0]" : "bg-[#2f3541] text-[#a9aeb6]"
            }`}
          >
            <span className="rotate-180 whitespace-nowrap [writing-mode:vertical-rl]">{t}</span>
          </button>
        ))}
      </div>
    </aside>
  );
}

// Grid basis vectors of the custom view, measured from the UCS origin
const origin = { x: 143, y: 93 };
const u = { x: 86, y: -21.8 };
const v = { x: 47, y: 43.3 };
const gridSteps = Array.from({ length: 111 }, (_, i) => i - 45);

function gridPath(major: boolean) {
  return gridSteps
    .filter((i) => (i % 5 === 0) === major)
    .map((i) => {
      const k = i / 5;
      const ax = origin.x + k * v.x;
      const ay = origin.y + k * v.y;
      const bx = origin.x + k * u.x;
      const by = origin.y + k * u.y;
      return `M${ax - 20 * u.x} ${ay - 20 * u.y}L${ax + 20 * u.x} ${ay + 20 * u.y}M${bx - 20 * v.x} ${by - 20 * v.y}L${bx + 20 * v.x} ${by + 20 * v.y}`;
    })
    .join("");
}

function Drawing() {
  return (
    <svg viewBox="0 0 584 410" preserveAspectRatio="xMidYMid slice" className="absolute inset-0 h-full w-full" role="img" aria-label="Cone frustum">
      <path d={gridPath(false)} stroke="#262f39" />
      <path d={gridPath(true)} stroke="#343d4a" />
      <path d="M143 93L503 0" stroke="#2c6a33" />
      <path d="M143 93L483 409" stroke="#6b2b30" />
      <g fill="none" stroke="#fff" strokeWidth="1.100">
        <ellipse cx="302.500" cy="54" rx="98.500" ry="48" />
        <ellipse cx="302.500" cy="208" rx="186.500" ry="91" />
        <path d="M257 10L216 127M215 77L137 251M349 97L389 288M390 31L468 166" />
        <ellipse cx="323" cy="162" rx="18" ry="10" />
        <path d="M305 162v6a18 10 0 0 0 36 0v-6M309 168a16 9 0 0 1 28 0" />
        <path d="M143 93L188 80M145 94L167 114M142.500 94v43M138 92l5-2l8 2l-5 4z" />
      </g>
      <g className="fill-white font-['Lato'] text-[18px] font-light">
        <text x="190" y="76">Y</text>
        <text x="171" y="112">X</text>
        <text x="147" y="134">Z</text>
      </g>
      <path d="M416 181L510 156" stroke="#86e886" strokeWidth="1.200" />
      <path d="M431 157L480 203" stroke="#d98080" />
      <path d="M447.500 142v92" stroke="#8583e8" strokeWidth="1.200" />
      <path d="M444.500 169.500h6v6h-6z" fill="#222933" stroke="#fff" />
    </svg>
  );
}

function ViewCube() {
  return (
    <svg viewBox="0 0 76 62" className="absolute right-[10px] top-8 h-[62px] w-[76px]" aria-label="View cube">
      <ellipse cx="38" cy="22" rx="33" ry="18" fill="none" stroke="#4d545f" strokeWidth="6" />
      <path d="M20 25l24-7v24l-25 6z" fill="#bfc2c6" />
      <path d="M44 18l11 13l1 22l-12-11z" fill="#a3a6ab" />
      <path d="M19 48l25-6l12 11l-23 6z" fill="#d0d2d4" />
      <path d="M44 18v24l12 11M44 42l-25 6" fill="none" stroke="#50565f" strokeDasharray="4 2" />
      <path d="M42 37h5v5h-5z" fill="#9fa9ba" />
      <g className="fill-[#c3c6ca] font-['Liberation_Sans'] text-[10px] font-bold">
        <text x="15" y="13" transform="rotate(28 19 9)">W</text>
        <text x="66" y="20" transform="rotate(20 70 17)">N</text>
        <text x="5" y="34" className="text-[8px]">S</text>
      </g>
      <text x="24" y="38" transform="rotate(172 32 35)" className="fill-[#3c424b] font-['Liberation_Sans'] text-[7px] font-bold">LEFT</text>
    </svg>
  );
}

function Viewport() {
  return (
    <div className="relative ml-px mr-[3px] min-h-[300px] flex-1 overflow-hidden bg-[#212830]">
      <Drawing />
      <p className="absolute left-[3px] top-1.5 leading-4">[−][Custom View][2D Wireframe]</p>
      <div className="absolute right-[11px] top-[10px] flex items-center gap-[9px]">
        <button type="button" aria-label="Minimize viewport" className="flex h-[11px] w-[11px] items-end">
          <span className="h-[3px] w-full bg-[#e6e6e6]" />
        </button>
        <button type="button" aria-label="Restore viewport">
          <svg viewBox="0 0 11 11" className="h-[11px] w-[11px]" aria-hidden="true">
            <path d="M1 3h7v7H1zM3 1h7v7M4 5.500h2v2H4z" fill="none" stroke="#e6e6e6" strokeWidth="1.500" />
          </svg>
        </button>
        <button type="button" aria-label="Close viewport">
          <svg viewBox="0 0 11 11" className="h-[11px] w-[11px]" aria-hidden="true">
            <path d="M1.500 1.500l8 8M9.500 1.500l-8 8" stroke="#e6e6e6" strokeWidth="2.500" />
          </svg>
        </button>
      </div>
      <ViewCube />
      <button type="button" className="absolute right-[25px] top-[122px] flex h-[17px] w-12 items-center justify-between rounded bg-[#9296a3] px-1 font-['Liberation_Sans',sans-serif] text-[11px] text-[#4a505d] ring-1 ring-inset ring-[#6f7480]">
        WCS
        <svg viewBox="0 0 9 6" className="h-1.5 w-[9px]" aria-hidden="true">
          <path d="M1 1h7L4.500 5z" fill="none" stroke="#c4c7cf" />
        </svg>
      </button>
    </div>
  );
}

function CommandLine() {
  return (
    <div className="mb-px mt-[3px] flex border border-[#222933] bg-[#2f3541]">
      <div className="flex w-6 flex-col items-center gap-1.5 pt-1">
        <svg viewBox="0 0 17 5" className="h-[5px] w-[17px]" aria-hidden="true">
          <path d="M0 1h17M0 4h17" stroke={W} strokeWidth="2" strokeDasharray="2 1" />
        </svg>
        <button type="button" aria-label="Close command line">
          <svg viewBox="0 0 10 10" className="h-[10px] w-[10px]" aria-hidden="true">
            <path d="M1 1l8 8M9 1L1 9" stroke={W} strokeWidth="2" />
          </svg>
        </button>
        <IconButton name="wrench" label="Customize" className="mt-1" />
      </div>
      <div className="flex flex-1 flex-col font-['Liberation_Mono',monospace] text-black">
        <div className="bg-[#c8c8c8] pb-0.5 pl-0.5 pt-[11px] leading-[15px]">
          <p>Specify top radius &lt;0.0000&gt;:</p>
          <p>Specify height or [2Point/Axis endpoint] &lt;0.7371&gt;:</p>
        </div>
        <div className="mt-px flex h-5 items-center bg-white pl-1">
          <Icon name="prompt" />
          <svg viewBox="0 0 8 4" className="ml-0.5 h-1 w-2" aria-hidden="true">
            <path d="M0 0h8L4 4z" fill="#666" />
          </svg>
          <input type="text" aria-label="Command" placeholder="Type a command" className="ml-1.5 flex-1 italic outline-none placeholder:text-[#777]" />
        </div>
      </div>
    </div>
  );
}

const spiral = Array.from({ length: 100 }, (_, i) => {
  const a = (i / 99) * Math.PI * 8;
  const r = 2.5 + 12.5 * Math.pow(i / 99, 1.2);
  return `${i ? "L" : "M"}${(15 + r * Math.cos(a)).toFixed(1)} ${(16 - r * Math.sin(a) * 0.95).toFixed(1)}`;
}).join("");

const toolIcons: Record<string, ReactNode> = {
  "Cylindrical Helix": (
    <g>
      <path
        d="M8 3.500h10q11 1 11 5t-13 4.500T3 9.500T16 6q13 1 13 6.500T16 20T3 17.500T16 14q13 1 13 7t-11 7.500H8"
        fill="none"
        stroke={W}
        strokeWidth="1.200"
      />
      <path d="M3 2h3v3H3zM3 27h3v3H3z" fill={B} />
    </g>
  ),
  "2D Spiral": <path d={spiral} fill="none" stroke={W} strokeWidth="1.200" />,
  "Elliptical Cylinder": (
    <g>
      <path d="M3 3q12 9 25 5v21q-17 2-25-6z" fill="#d4d6d8" />
      <path d="M3 4q0-3 12-1q13 2 13 5q-4 3-12 1T3 4z" fill="#f7f7f7" />
    </g>
  ),
  "Frustum Cone": (
    <g>
      <path d="M10 4q5-3 10 0l9 20q-3 4-13 4T1 24z" fill="#ededed" />
      <path d="M18 3l2 1l9 20q-1 3-8 4z" fill="#c9cbcd" />
      <ellipse cx="15" cy="4" rx="5" ry="2" fill="#fff" />
    </g>
  ),
  "Frustum Pyramid": (
    <g>
      <path d="M10 4l5 3v23L1 21z" fill="#ededed" />
      <path d="M20 4l-5 3v23l15-9z" fill="#d0d2d4" />
      <path d="M10 4l5-3l5 3l-5 3z" fill="#fff" />
    </g>
  ),
  UCS: (
    <g>
      <path d="M3.500 4v24H28M4 28l13-13" stroke={W} fill="none" />
      <path d="M0 6l3.500-6L7 6zM26 24.500l6 3.500l-6 3.500zM20 12l-2 7l-5-5z" fill={W} />
    </g>
  ),
  "UCS Previous": (
    <g>
      <path d="M3.500 4v24H28" stroke={W} fill="none" />
      <path d="M0 6l3.500-6L7 6zM26 24.500l6 3.500l-6 3.500z" fill={W} />
      <path d="M8 13l10-6v4q10 0 10 8q-4-4-10-3v3z" fill={B} />
    </g>
  ),
  "3D Align": (
    <g>
      <path d="M0 32V8l7-7v4L2 10v22z" fill={W} />
      <path d="M3 10h12v11H3z" fill={B} />
      <path d="M3 10l4-5h11l-3 5z" fill="#b4defd" />
      <path d="M15 10l3-5v11l-3 5z" fill="#4e9fdc" />
      <path d="M3 23h24v9H3z" fill="#d6d8da" />
      <path d="M15 23l4-4h12l-4 4z" fill="#f4f4f4" />
      <path d="M27 23l4-4v9l-4 4z" fill="#b4b6b8" />
    </g>
  ),
};

const paletteTabs = ["Mode...", "Annot...", "Archit...", "Mech...", "Electri...", "Civil", "Struct...", "Hatch..."];

function ToolPalettes() {
  return (
    <aside className="flex w-[233px] shrink-0 pb-1 pl-1 pr-[3px] pt-1.5">
      <div className="flex flex-col pt-[25px]">
        {paletteTabs.map((t) => (
          <button
            key={t}
            type="button"
            className={`flex h-[52px] w-[22px] items-center justify-center rounded-l border border-[#262c36] ${
              t === "Mode..." ? "border-r-transparent text-[#f0f0f0]" : "bg-[#2f3541] text-[#a9aeb6]"
            }`}
          >
            <span className="rotate-180 whitespace-nowrap [writing-mode:vertical-rl]">{t}</span>
          </button>
        ))}
        {[0, 1, 2].map((i) => (
          <span key={i} className="h-1 border-b border-l border-[#262c36] bg-[#2f3541]" />
        ))}
      </div>
      <div className="flex flex-1 flex-col rounded-b border-b border-[#2a313c]">
        <h2 className="flex h-[22px] items-center gap-1.5 rounded-t bg-[#2f3541] pl-[5px]">
          <Grip />
          TOOL PALETTES - ALL P...
        </h2>
        <ul className="pl-1.5 pt-[5px]">
          {Object.entries(toolIcons).map(([name, icon]) => (
            <li key={name}>
              <button type="button" className="flex h-[42px] items-center gap-1">
                <svg viewBox="0 0 32 32" className="h-8 w-8" aria-hidden="true">
                  {icon}
                </svg>
                {name}
              </button>
            </li>
          ))}
        </ul>
      </div>
    </aside>
  );
}

function StatusButton({ name, label, active = false }: { name: string; label: string; active?: boolean }) {
  return (
    <button type="button" aria-label={label} className={`flex h-[23px] w-[23px] items-center justify-center ${active ? "bg-[#5b8fc4]" : ""}`}>
      <Icon name={name} />
    </button>
  );
}

function StatusCaret({ label }: { label: string }) {
  return (
    <button type="button" aria-label={label} className="flex h-[23px] w-4 items-center justify-center">
      <Caret />
    </button>
  );
}

function StatusBar() {
  return (
    <footer className="flex h-[31px] justify-end gap-0.5 pr-[3px] pt-px">
      <button type="button" className="h-[23px] w-[47px] bg-[#3b4453] font-['Liberation_Sans',sans-serif]">
        MODEL
      </button>
      <div className="ml-px flex h-[23px] gap-px bg-[#3b4453]">
        <StatusButton name="gridOn" label="Grid" active />
        <StatusButton name="snap" label="Snap" />
        <StatusCaret label="Snap options" />
      </div>
      <div className="flex h-[23px] gap-px bg-[#3b4453]">
        <StatusButton name="ortho" label="Ortho" />
        <StatusButton name="polar" label="Polar tracking" active />
        <StatusCaret label="Polar options" />
        <StatusButton name="isodraft" label="Isodraft" />
        <StatusCaret label="Isodraft options" />
      </div>
      <div className="flex h-[23px] gap-px bg-[#3b4453]">
        <StatusButton name="track" label="Object snap tracking" active />
        <StatusButton name="osnap" label="Object snap" active />
        <StatusCaret label="Object snap options" />
      </div>
      <div className="flex h-[23px] items-center gap-px bg-[#3b4453]">
        <StatusButton name="annoVis" label="Annotation visibility" active />
        <StatusButton name="annoAuto" label="Auto scale" />
        <StatusButton name="anno" label="Annotation scale" />
        <button type="button" className="flex items-center gap-1.5 px-0.5 font-['Liberation_Sans',sans-serif]">
          1:1
          <Caret />
        </button>
      </div>
      <div className="flex h-[23px] w-[145px] bg-[#3b4453]">
        <StatusButton name="gear" label="Workspace" />
        <StatusCaret label="Workspace options" />
        <StatusButton name="plus" label="Annotation monitor" />
        <StatusButton name="anno" label="Isolate" />
        <StatusButton name="iso" label="Clean screen" />
        <StatusButton name="menu" label="Customization" />
      </div>
    </footer>
  );
}

function SiteBadge() {
  return (
    <div className="absolute bottom-[5px] right-[3px]">
      <svg viewBox="0 0 136 45" className="h-[45px] w-[136px]" role="img" aria-label="962.NET">
        <defs>
          <linearGradient id="badge" x1="0" y1="0" x2="0" y2="1">
            <stop offset="0" stopColor="#969ba4" stopOpacity=".95" />
            <stop offset="1" stopColor="#1f242c" stopOpacity=".7" />
          </linearGradient>
        </defs>
        <path d="M.5.500h135v44H.5z" fill="url(#badge)" stroke="#9ba0a8" />
        <g className="font-['DejaVu_Sans'] text-[32px] font-bold italic" stroke="#fff" strokeWidth="2" paintOrder="stroke">
          <text x="9" y="30" fill="#f08a1d">9</text>
          <text x="32" y="30" fill="#3f9fdd">6</text>
          <text x="55" y="30" fill="#f08a1d">2</text>
        </g>
        <path d="M9 33q26 18 58 1l-2-2l11-2l-4 10l-2-3q-36 17-61-4z" fill="#fff" />
        <text x="81" y="21" className="fill-[#f4f4f4] font-['Liberation_Sans'] text-[20px] font-bold">.NET</text>
        <text x="80" y="40" className="fill-[#f4f4f4] font-['Noto_Sans_CJK_SC'] text-[15px] font-bold">乐游网</text>
      </svg>
    </div>
  );
}

export default function App() {
  return (
    <div className="relative flex min-h-screen flex-col overflow-hidden border border-t-2 border-[#1f86b5] bg-[#222933] font-['Noto_Sans','Noto_Sans_CJK_SC',sans-serif] text-xs text-[#e6e8ea]">
      <TitleBar />
      <MenuTabs />
      <Ribbon />
      <DocTabs />
      <main className="ml-[3px] flex flex-1 bg-[#3b4453]">
        <ProjectManager />
        <div className="flex min-w-0 flex-1 flex-col pt-1">
          <Viewport />
          <CommandLine />
        </div>
        <ToolPalettes />
      </main>
      <StatusBar />
      <SiteBadge />
    </div>
  );
}
